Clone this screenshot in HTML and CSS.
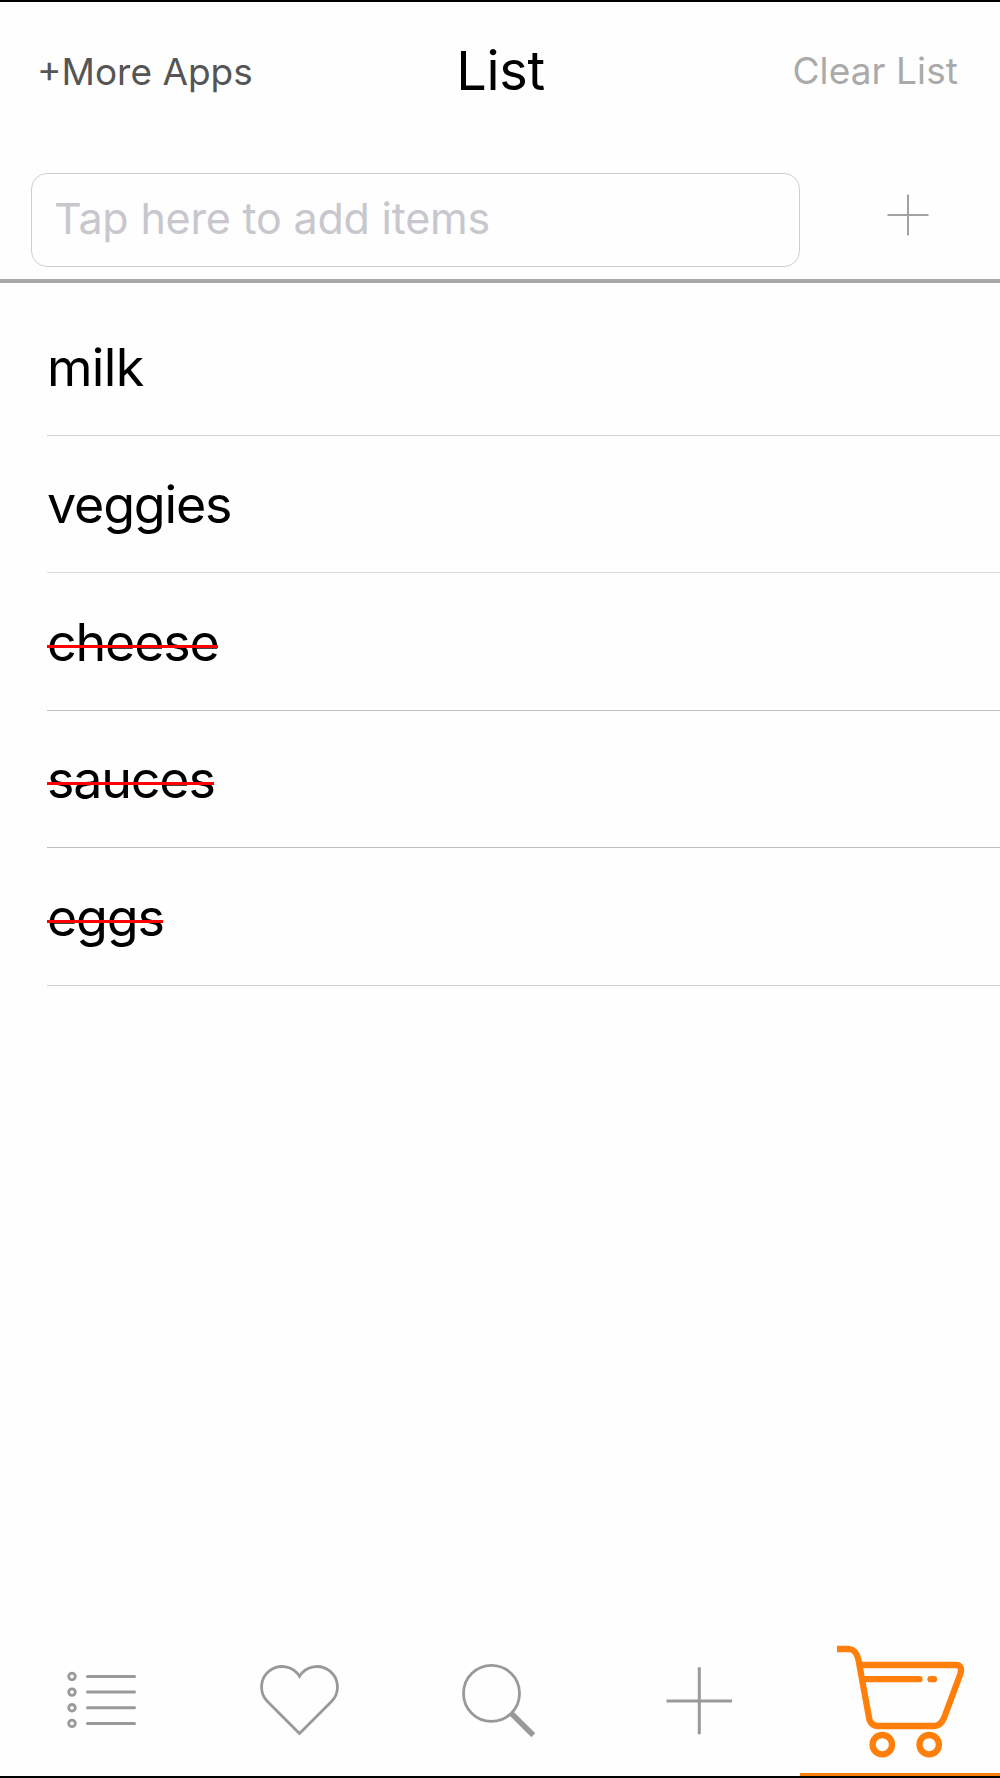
FILE: index.html
```
<!DOCTYPE html>
<html lang="en">
<head>
  <meta charset="utf-8">
  <title>List</title>
  <link rel="stylesheet" href="styles.css">
</head>
<body>
  <div class="app">
    <header class="header">
      <a class="header-link more">+More Apps</a>
      <h1 class="title">List</h1>
      <a class="header-link clear">Clear List</a>
    </header>

    <form class="add-row">
      <input class="add-input" type="text" placeholder="Tap here to add items">
      <button class="add-button" type="button" aria-label="Add">
        <svg width="42" height="42" viewBox="0 0 42 42"><path d="M21 0.500V41.500M0.500 21H41.500"/></svg>
      </button>
    </form>

    <ul class="list">
      <li class="item"><span class="item-text narrow">milk</span></li>
      <li class="item light"><span class="item-text">veggies</span></li>
      <li class="item dark"><span class="item-text done">cheese</span></li>
      <li class="item dark"><span class="item-text done">sauces</span></li>
      <li class="item"><span class="item-text done">eggs</span></li>
    </ul>

    <nav class="tabs">
      <a class="tab" aria-label="Lists">
        <svg viewBox="0 0 200 140">
          <g stroke-width="2.8"><circle cx="72" cy="40.5" r="3.3"/><circle cx="72" cy="56.1" r="3.3"/><circle cx="72" cy="71.8" r="3.3"/><circle cx="72" cy="87.4" r="3.3"/></g>
          <path d="M87.5 40.5H134.5M87.5 56.1H134.5M87.5 71.8H134.5M87.5 87.4H134.5" stroke-width="3" stroke-linecap="round"/>
        </svg>
      </a>
      <a class="tab" aria-label="Favourites">
        <svg viewBox="0 0 200 140"><path d="M99.5 40.3A20.500 20.500 0 1 0 67.5 65.5L99.5 97.5L131.5 65.5A20.500 20.500 0 1 0 99.5 40.3Z" stroke-width="2.8"/></svg>
      </a>
      <a class="tab" aria-label="Search">
        <svg viewBox="0 0 200 140"><circle cx="91.5" cy="57.4" r="28" stroke-width="2.8"/><path d="M111.5 77.5L133.3 99.3" stroke-width="5.5"/></svg>
      </a>
      <a class="tab" aria-label="New">
        <svg viewBox="0 0 200 140"><path d="M99.3 31.3V98.3M66.5 65H132" stroke-width="3"/></svg>
      </a>
      <a class="tab active" aria-label="Shopping list">
        <svg viewBox="0 0 200 140" stroke-width="6.3">
          <path d="M37 13H49.5Q56.5 14 58.5 24L69.5 84Q72 90 78 90H134Q140.5 90 144 82L160 39Q163.500 29 155.500 29H62"/>
          <path d="M65 43.200H119.500M130.500 43.200H134" stroke-linecap="round"/>
          <circle cx="82.300" cy="108.700" r="9.700"/><circle cx="129.200" cy="108.700" r="9.700"/>
        </svg>
      </a>
    </nav>
  </div>
</body>
</html>
```

FILE: styles.css
```
* {
  box-sizing: border-box;
}

body {
  margin: 0;
  background: #fefefe;
  color: #000;
  font-family: Inter, "Liberation Sans", sans-serif;
}

.app {
  display: flex;
  flex-direction: column;
  width: 1000px;
  height: 1778px;
  border-top: 2px solid #000;
  border-bottom: 2px solid #000;
}

.header {
  display: grid;
  grid-template-columns: 1fr auto 1fr;
  align-items: center;
  height: 137px;
  padding: 0 42px 0 37px;
}

.header-link {
  font-size: 37px;
}

.more {
  padding-top: 2px;
  color: #555;
}

.clear {
  justify-self: end;
  color: #aaa;
  letter-spacing: 0.1px;
}

.title {
  margin: 0;
  padding-left: 6px;
  font-size: 54px;
  font-weight: 400;
  letter-spacing: -0.3px;
}

.add-row {
  display: flex;
  height: 144px;
  padding: 34px 0 0 31px;
  border-bottom: 4px solid #a8a8a8;
}

.add-input {
  width: 769px;
  height: 94px;
  padding: 0 20px 4px 22px;
  border: 1px solid #cfcfcf;
  border-radius: 16px;
  background: #fefefe;
  font: 43px Inter, "Liberation Sans", sans-serif;
  letter-spacing: -0.2px;
}

.add-input::placeholder {
  color: #c7c7cd;
  opacity: 1;
}

.add-button {
  display: flex;
  flex: 1;
  justify-content: center;
  align-items: center;
  height: 84px;
  padding: 0 0 0 16px;
  border: 0;
  background: none;
}

.add-button svg {
  fill: none;
  stroke: #a2a2a2;
  stroke-width: 2;
}

.list {
  flex: 1;
  margin: 0;
  padding: 15px 0 0 47px;
  list-style: none;
}

.item {
  display: flex;
  align-items: center;
  height: 137.5px;
  padding-top: 2px;
  border-bottom: 1px solid #d2d2d4;
}

.item.light {
  border-color: #dcdcdc;
}

.item.dark {
  border-color: #bcbcc2;
}

.item-text {
  position: relative;
  font-size: 52px;
  letter-spacing: -1.2px;
}

.item-text.narrow {
  letter-spacing: -0.7px;
}

.done::after {
  content: "";
  position: absolute;
  top: 34px;
  right: 1px;
  left: 0;
  height: 3px;
  background: #f00;
}

.tabs {
  display: grid;
  grid-template-columns: repeat(5, 1fr);
  height: 140px;
}

.tab {
  display: flex;
}

.tab svg {
  width: 200px;
  height: 140px;
  fill: none;
  stroke: #999;
}

.tab.active {
  box-shadow: inset 0 -3px #ff7f0a;
}

.tab.active svg {
  stroke: #ff7f0a;
}
```
